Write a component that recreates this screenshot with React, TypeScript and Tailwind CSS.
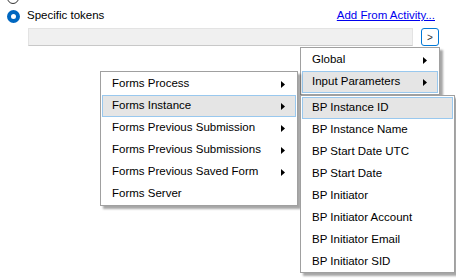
import { Fragment } from "react"

type Item = { label: string; sub?: boolean; active?: boolean }

const formsMenu: Item[] = [
  { label: "Forms Process", sub: true },
  { label: "Forms Instance", sub: true, active: true },
  { label: "Forms Previous Submission", sub: true },
  { label: "Forms Previous Submissions", sub: true },
  { label: "Forms Previous Saved Form", sub: true },
  { label: "Forms Server" },
]

const scopeMenu: Item[] = [
  { label: "Global", sub: true },
  { label: "Input Parameters", sub: true, active: true },
]

const paramMenu: Item[] = [
  { label: "BP Instance ID", active: true },
  { label: "BP Instance Name" },
  { label: "BP Start Date UTC" },
  { label: "BP Start Date" },
  { label: "BP Initiator" },
  { label: "BP Initiator Account" },
  { label: "BP Initiator Email" },
  { label: "BP Initiator SID" },
]

function Arrow() {
  return (
    <svg width="4" height="7" viewBox="0 0 4 7" className="shrink-0">
      <path d="M0 0 L4 3.5 L0 7 Z" fill="#000" />
    </svg>
  )
}

function Menu({ items, className }: { items: Item[]; className: string }) {
  return (
    <div
      className={`absolute bg-white border border-[#a0a0a0] pt-[1px] px-[1px] shadow-[3px_3px_2px_rgba(0,0,0,0.35)] ${className}`}
    >
      {items.map((item) => (
        <Fragment key={item.label}>
          <div
            className={`h-[22px] flex items-center justify-between pl-[9px] pr-[10px] border ${
              item.active ? "bg-[#e5e5e5] border-[#99c8ee]" : "border-transparent"
            }`}
          >
            <span className="whitespace-nowrap">{item.label}</span>
            {item.sub && <Arrow />}
          </div>
        </Fragment>
      ))}
    </div>
  )
}

export default function App() {
  return (
    <div className="relative w-[456px] h-[278px] overflow-hidden bg-white text-[11.5px] text-black font-['Liberation_Sans',Arial,sans-serif]">
      <div className="absolute left-[7px] top-[-8px] w-[12px] h-[12px] rounded-full border border-[#333]" />

      <div className="flex items-center h-[18px] mt-[7px] pl-[7px] pr-[21px]">
        <span className="w-[13px] h-[13px] rounded-full border-[4px] border-[#0067c0] bg-white" />
        <span className="ml-[7px]">Specific tokens</span>
        <span className="ml-auto text-[#0000ee] underline">Add From Activity...</span>
      </div>

      <div className="flex items-center mt-[3px] pl-[28px] gap-[8px]">
        <div className="w-[385px] h-[18px] bg-[#f0f0f0] border border-[#e3e3e3] border-b-[#c8c8c8]" />
        <div className="w-[18px] h-[18px] rounded-[3px] border border-[#0078d7] flex items-center justify-center text-[10px] text-[#333]">
          &gt;
        </div>
      </div>

      <Menu items={scopeMenu} className="left-[300px] top-[47px] w-[140px] h-[48px]" />
      <Menu items={formsMenu} className="left-[100px] top-[71px] w-[198px] h-[135px]" />
      <Menu items={paramMenu} className="left-[300px] top-[95px] w-[155px] h-[178px]" />
    </div>
  )
}
